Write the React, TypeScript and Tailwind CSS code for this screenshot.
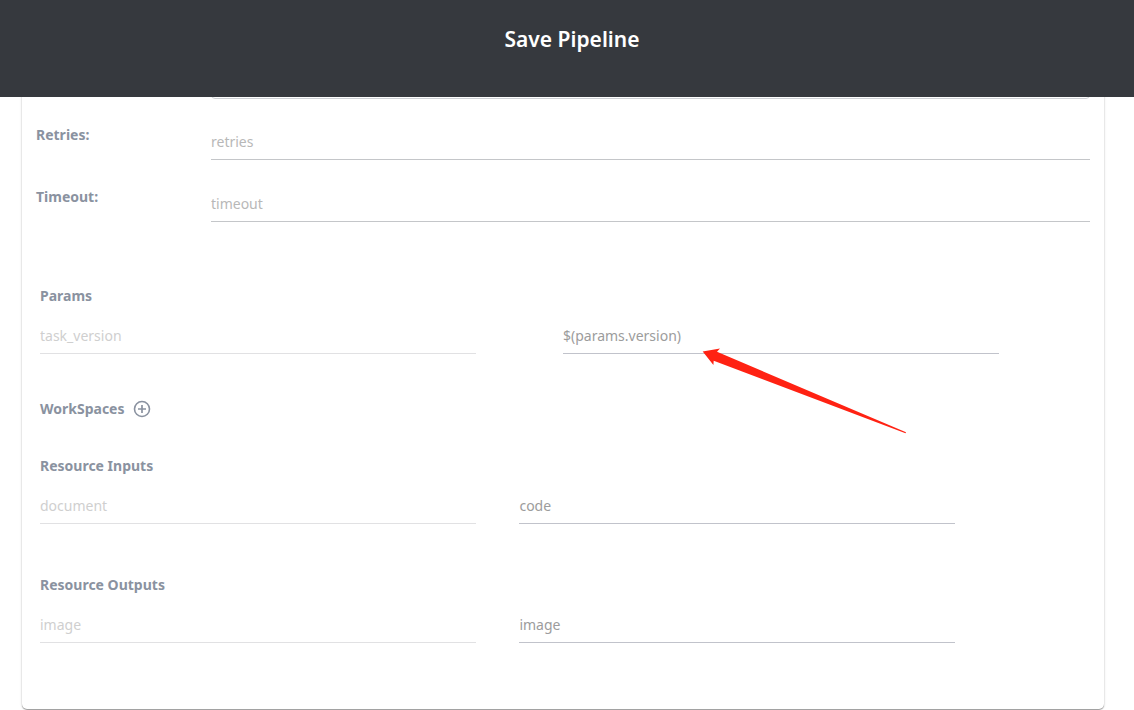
import React from "react";

const fieldBase =
  "block h-10 w-full min-w-0 rounded-none border-0 border-b bg-transparent px-0 pt-[3px] pb-0 text-[14px] leading-5 outline-none";

function SettingRow({ id, label }: { id: string; label: string }) {
  return (
    <div className="flex h-[62px] items-start">
      <label
        htmlFor={id}
        className="w-[175px] shrink-0 pt-[26px] text-[14px] leading-5 font-bold text-[#8a92a0]"
      >
        {label}
      </label>
      <div className="min-w-0 flex-1 pt-[21px]">
        <input
          id={id}
          placeholder={id}
          className={`${fieldBase} border-[#c4c6c9] text-[#9c9c9c] placeholder:text-[#b8b8b8]`}
        />
      </div>
    </div>
  );
}

function PairRow({
  name,
  value,
  label,
  columns,
}: {
  name: string;
  value: string;
  label: string;
  columns: string;
}) {
  return (
    <div className={`grid ${columns}`}>
      <input
        aria-label={`${label} name`}
        defaultValue={name}
        disabled
        className={`${fieldBase} border-[#e1e1e3] text-[#cfcfcf]`}
      />
      <input
        aria-label={`${label} value`}
        defaultValue={value}
        className={`${fieldBase} col-start-3 border-[#c1c3cb] text-[#9c9c9c]`}
      />
    </div>
  );
}

function Heading({ children }: { children: React.ReactNode }) {
  return (
    <h2 className="flex h-5 items-center text-[14px] leading-5 font-bold text-[#8a92a0]">
      {children}
    </h2>
  );
}

export default function App() {
  return (
    <div className="overflow-hidden bg-white font-['Noto_Sans','Open_Sans',sans-serif]">
      <header className="relative z-10 flex h-[97px] justify-center bg-[#36393e] pt-[23px] pl-[10px]">
        <h1 className="text-[21px] leading-8 font-semibold text-white">Save Pipeline</h1>
      </header>

      <main className="relative -mt-10 mr-[30px] mb-px ml-[22px] rounded-[5px] bg-white px-[14px] pt-1 pb-[66px] shadow-[0_1px_1px_rgba(0,0,0,0.36),0_0_3px_rgba(0,0,0,0.16)]">
        <div className="pl-[175px]">
          <input
            aria-label="Task"
            className="block h-[38px] w-full rounded-[4px] border border-[#cdd0d4] px-3 text-[14px] outline-none"
          />
        </div>
        <SettingRow id="retries" label="Retries:" />
        <SettingRow id="timeout" label="Timeout:" />

        <div className="px-1">
          <section className="pt-[63px]">
            <Heading>Params</Heading>
            <div className="pt-2">
              <PairRow
                label="Param"
                name="task_version"
                value="$(params.version)"
                columns="grid-cols-[5fr_1fr_5fr_1fr]"
              />
            </div>
          </section>

          <section className="pt-[45px]">
            <Heading>
              WorkSpaces
              <button type="button" aria-label="Add workspace" className="ml-2 cursor-pointer">
                <svg width="18" height="18" viewBox="0 0 18 18" fill="none" stroke="#8a92a0">
                  <circle cx="9" cy="9" r="7.5" strokeWidth="1.6" />
                  <path d="M9 5v8M5 9h8" strokeWidth="1.7" />
                </svg>
              </button>
            </Heading>
          </section>

          <section className="pt-[37px]">
            <Heading>Resource Inputs</Heading>
            <div className="pt-2">
              <PairRow
                label="Resource input"
                name="document"
                value="code"
                columns="grid-cols-[10fr_1fr_10fr_3fr]"
              />
            </div>
          </section>

          <section className="pt-[51px]">
            <Heading>Resource Outputs</Heading>
            <div className="pt-2">
              <PairRow
                label="Resource output"
                name="image"
                value="image"
                columns="grid-cols-[10fr_1fr_10fr_3fr]"
              />
            </div>
          </section>
        </div>

        <svg
          aria-hidden="true"
          className="pointer-events-none absolute top-[291px] left-[680px]"
          width="206"
          height="88"
          viewBox="0 0 206 88"
        >
          <path d="M0.700 3.500L18 .6L15 3.800L204 84.300L203.500 85.200L11.700 12.800L11.400 17Z" fill="#ff2213" />
        </svg>
      </main>
    </div>
  );
}
